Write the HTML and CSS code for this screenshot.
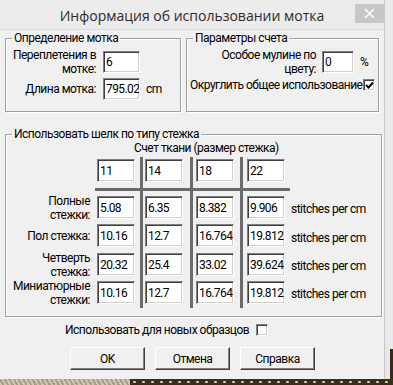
FILE: index.html
```html
<!DOCTYPE html>
<html lang="ru">
<head>
    <meta charset="UTF-8">
    <meta name="viewport" content="width=device-width, initial-scale=1.0">
    <title>Информация об использовании мотка</title>
    <link rel="stylesheet" href="styles.css">
</head>
<body>
    <div class="screen">
        <div class="window">
            <div class="titlebar">
                <span class="title">Информация об использовании мотка</span>
                <span class="close">
                    <svg width="11" height="11" viewBox="0 0 11 11"><path d="M1 1 L10 10 M10 1 L1 10" stroke="#fff" stroke-width="1.6"/></svg>
                </span>
            </div>

            <div class="client">
                <div class="top-row">
                    <fieldset class="group group-skein">
                        <legend>Определение мотка</legend>
                        <div class="field-row">
                            <label class="lbl lbl-skein">Переплетения в<br>мотке:</label>
                            <input class="box box-skein" type="text" value="6">
                        </div>
                        <div class="field-row row-length">
                            <label class="lbl lbl-skein">Длина мотка:</label>
                            <input class="box box-skein" type="text" value="795.02">
                            <span class="unit">cm</span>
                        </div>
                    </fieldset>

                    <fieldset class="group group-count">
                        <legend>Параметры счета</legend>
                        <div class="field-row">
                            <label class="lbl lbl-count">Особое мулине по<br>цвету:</label>
                            <input class="box box-count" type="text" value="0">
                            <span class="unit">%</span>
                        </div>
                        <div class="field-row row-round">
                            <span>Округлить общее использование</span>
                            <span class="check checked">
                                <svg width="9" height="9" viewBox="0 0 9 9"><path d="M1 4 L3.5 6.5 L8 1.5" fill="none" stroke="#000" stroke-width="2"/></svg>
                            </span>
                        </div>
                    </fieldset>
                </div>

                <fieldset class="group group-stitch">
                    <legend>Использовать шелк по типу стежка</legend>
                    <div class="count-caption">Счет ткани (размер стежка)</div>
                    <div class="stitch-grid">
                        <span class="vbar vbar-1"></span>
                        <span class="vbar vbar-2"></span>
                        <span class="vbar vbar-3"></span>

                        <span class="cell-label"></span>
                        <input class="box" type="text" value="11">
                        <input class="box c2" type="text" value="14">
                        <input class="box c3" type="text" value="18">
                        <input class="box c4" type="text" value="22">

                        <span class="hbar"></span>

                        <label class="cell-label">Полные<br>стежки:</label>
                        <input class="box" type="text" value="5.08">
                        <input class="box c2" type="text" value="6.35">
                        <input class="box c3" type="text" value="8.382">
                        <input class="box c4" type="text" value="9.906">
                        <span class="per">stitches per cm</span>

                        <label class="cell-label">Пол стежка:</label>
                        <input class="box" type="text" value="10.16">
                        <input class="box c2" type="text" value="12.7">
                        <input class="box c3" type="text" value="16.764">
                        <input class="box c4" type="text" value="19.812">
                        <span class="per">stitches per cm</span>

                        <label class="cell-label">Четверть<br>стежка:</label>
                        <input class="box" type="text" value="20.32">
                        <input class="box c2" type="text" value="25.4">
                        <input class="box c3" type="text" value="33.02">
                        <input class="box c4" type="text" value="39.624">
                        <span class="per">stitches per cm</span>

                        <label class="cell-label">Миниатюрные<br>стежки:</label>
                        <input class="box" type="text" value="10.16">
                        <input class="box c2" type="text" value="12.7">
                        <input class="box c3" type="text" value="16.764">
                        <input class="box c4" type="text" value="19.812">
                        <span class="per">stitches per cm</span>
                    </div>
                </fieldset>

                <div class="new-samples">
                    <span>Использовать для новых образцов</span>
                    <span class="check"></span>
                </div>

                <div class="buttons">
                    <button class="btn">OK</button>
                    <button class="btn">Отмена</button>
                    <button class="btn">Справка</button>
                </div>
            </div>
        </div>
        <div class="side"></div>
        <div class="desktop-strip">
            <span class="strip-left"></span>
            <span class="strip-right"></span>
        </div>
    </div>
</body>
</html>
```

FILE: styles.css
```css
body {
    margin: 0;
    background-color: #e9e9e9;
    font-family: Roboto, 'Liberation Sans', sans-serif;
    font-size: 12px;
    letter-spacing: -0.5px;
    color: #000;
}

.screen {
    position: relative;
    width: 393px;
    height: 385px;
    overflow: hidden;
}

.window {
    width: 384px;
    height: 379px;
    background-color: #f0f0f0;
    border-right: 1px solid #c9c9c9;
}

/* title bar */
.titlebar {
    position: relative;
    height: 29px;
    background-color: #ececec;
    border-bottom: 1px solid #dcdcdc;
    display: flex;
    justify-content: center;
    align-items: center;
}

.title {
    font-family: 'Open Sans', 'Noto Sans', sans-serif;
    font-size: 14px;
    letter-spacing: 0;
    color: #2b2b2b;
    padding-top: 2px;
}

.close {
    position: absolute;
    top: 4px;
    right: 0;
    width: 29px;
    height: 19px;
    background-color: #c7c7c7;
    display: flex;
    justify-content: center;
    align-items: center;
}

/* client area */
.client {
    padding: 1px 0 0 5px;
}

.top-row {
    display: flex;
    gap: 5px;
}

.group {
    margin: 0;
    padding: 0;
    border: 1px solid #a0a0a0;
    box-shadow: inset 1px 1px 0 #fff, 1px 1px 0 #fff;
    min-width: 0;
}

.group legend {
    margin-left: 6px;
    padding: 0 2px;
    line-height: 15px;
}

.group-skein {
    width: 174px;
    padding: 2px 0 11px;
}

.group-count {
    width: 191px;
    padding: 2px 0 11px;
}

.field-row {
    display: flex;
    align-items: center;
    white-space: nowrap;
}

.lbl {
    text-align: right;
    line-height: 14px;
}

.lbl-skein {
    width: 90px;
    margin-right: 7px;
}

.lbl-count {
    width: 129px;
    margin-right: 6px;
}

.row-length {
    margin-top: 2px;
}

.row-round {
    margin-top: 2px;
    padding-left: 3px;
}

.unit {
    margin-left: 6px;
}

.box {
    box-sizing: border-box;
    width: 38px;
    height: 23px;
    margin: 0;
    padding: 0 0 0 2px;
    font-family: inherit;
    font-size: 12px;
    letter-spacing: -0.6px;
    color: #000;
    background-color: #fff;
    border-style: solid;
    border-width: 1px;
    border-color: #808080 #fff #fff #808080;
    box-shadow: inset 1px 1px 0 #404040, inset -1px -1px 0 #d4d0c8;
    outline: none;
}

.box-skein {
    width: 37px;
    height: 22px;
}

.box-count {
    width: 32px;
    height: 22px;
}

.check {
    box-sizing: border-box;
    width: 12px;
    height: 12px;
    background-color: #fff;
    border-style: solid;
    border-width: 1px;
    border-color: #808080 #fff #fff #808080;
    box-shadow: inset 1px 1px 0 #404040, inset -1px -1px 0 #d4d0c8;
    display: flex;
    justify-content: center;
    align-items: center;
}

.checked {
    margin-left: 1px;
}

/* stitch table */
.group-stitch {
    width: 375px;
    margin-top: 15px;
    padding: 0 0 12px;
}

.count-caption {
    margin-top: -1px;
    padding-left: 128px;
    line-height: 14px;
}

.stitch-grid {
    display: grid;
    grid-template-columns: 91px 38px 10px 38px 13px 38px 13px 38px 1fr;
    grid-template-rows: 24px 3px 23px 24px 23px 23px;
    row-gap: 5px;
    margin-top: 4px;
}

.stitch-grid .box {
    grid-column: 2;
    height: 23px;
}

.stitch-grid .c2 {
    grid-column: 4;
}

.stitch-grid .c3 {
    grid-column: 6;
}

.stitch-grid .c4 {
    grid-column: 8;
}

.cell-label {
    grid-column: 1;
    text-align: right;
    padding-right: 7px;
    line-height: 14px;
    align-self: center;
}

.per {
    grid-column: 9;
    padding-left: 6px;
    align-self: center;
    padding-top: 3px;
}

.vbar {
    grid-row: 1 / 7;
    justify-self: start;
    width: 3px;
    margin: -2px 0 -4px;
    background-color: #6b6b6b;
}

.vbar-1 {
    grid-column: 3;
    margin-left: 5px;
}

.vbar-2 {
    grid-column: 5;
    margin-left: 7px;
}

.vbar-3 {
    grid-column: 7;
    margin-left: 6px;
}

/* spans the whole row so the labels of the next rows fall below it */
.hbar {
    grid-row: 2;
    grid-column: 1 / -1;
    margin: 0 91px 0 89px;
    background-color: #6b6b6b;
}

/* bottom controls */
.new-samples {
    display: flex;
    align-items: center;
    gap: 7px;
    padding-left: 60px;
    margin-top: 6px;
}

.buttons {
    display: flex;
    gap: 10px;
    padding-left: 65px;
    margin-top: 10px;
}

.btn {
    box-sizing: border-box;
    width: 75px;
    height: 23px;
    font-family: inherit;
    font-size: 12px;
    letter-spacing: -0.5px;
    color: #000;
    background-color: #f0f0f0;
    border-style: solid;
    border-width: 1px;
    border-color: #fff #404040 #404040 #fff;
    box-shadow: inset -1px -1px 0 #808080;
    padding: 0;
}

/* what is behind the dialog */
.side {
    position: absolute;
    right: 0;
    bottom: 6px;
    width: 3px;
    height: 30px;
    background-color: #3a2a1a;
}

.desktop-strip {
    display: flex;
    height: 6px;
}

.strip-left {
    width: 130px;
    background: repeating-linear-gradient(60deg, #cfc6b2 0 2px, #a99e86 2px 4px);
}

.strip-right {
    flex: 1;
    background-color: #3b2c1c;
    background-image: radial-gradient(circle, #d8cfbf 1px, transparent 1.5px);
    background-size: 9px 6px;
}
```
